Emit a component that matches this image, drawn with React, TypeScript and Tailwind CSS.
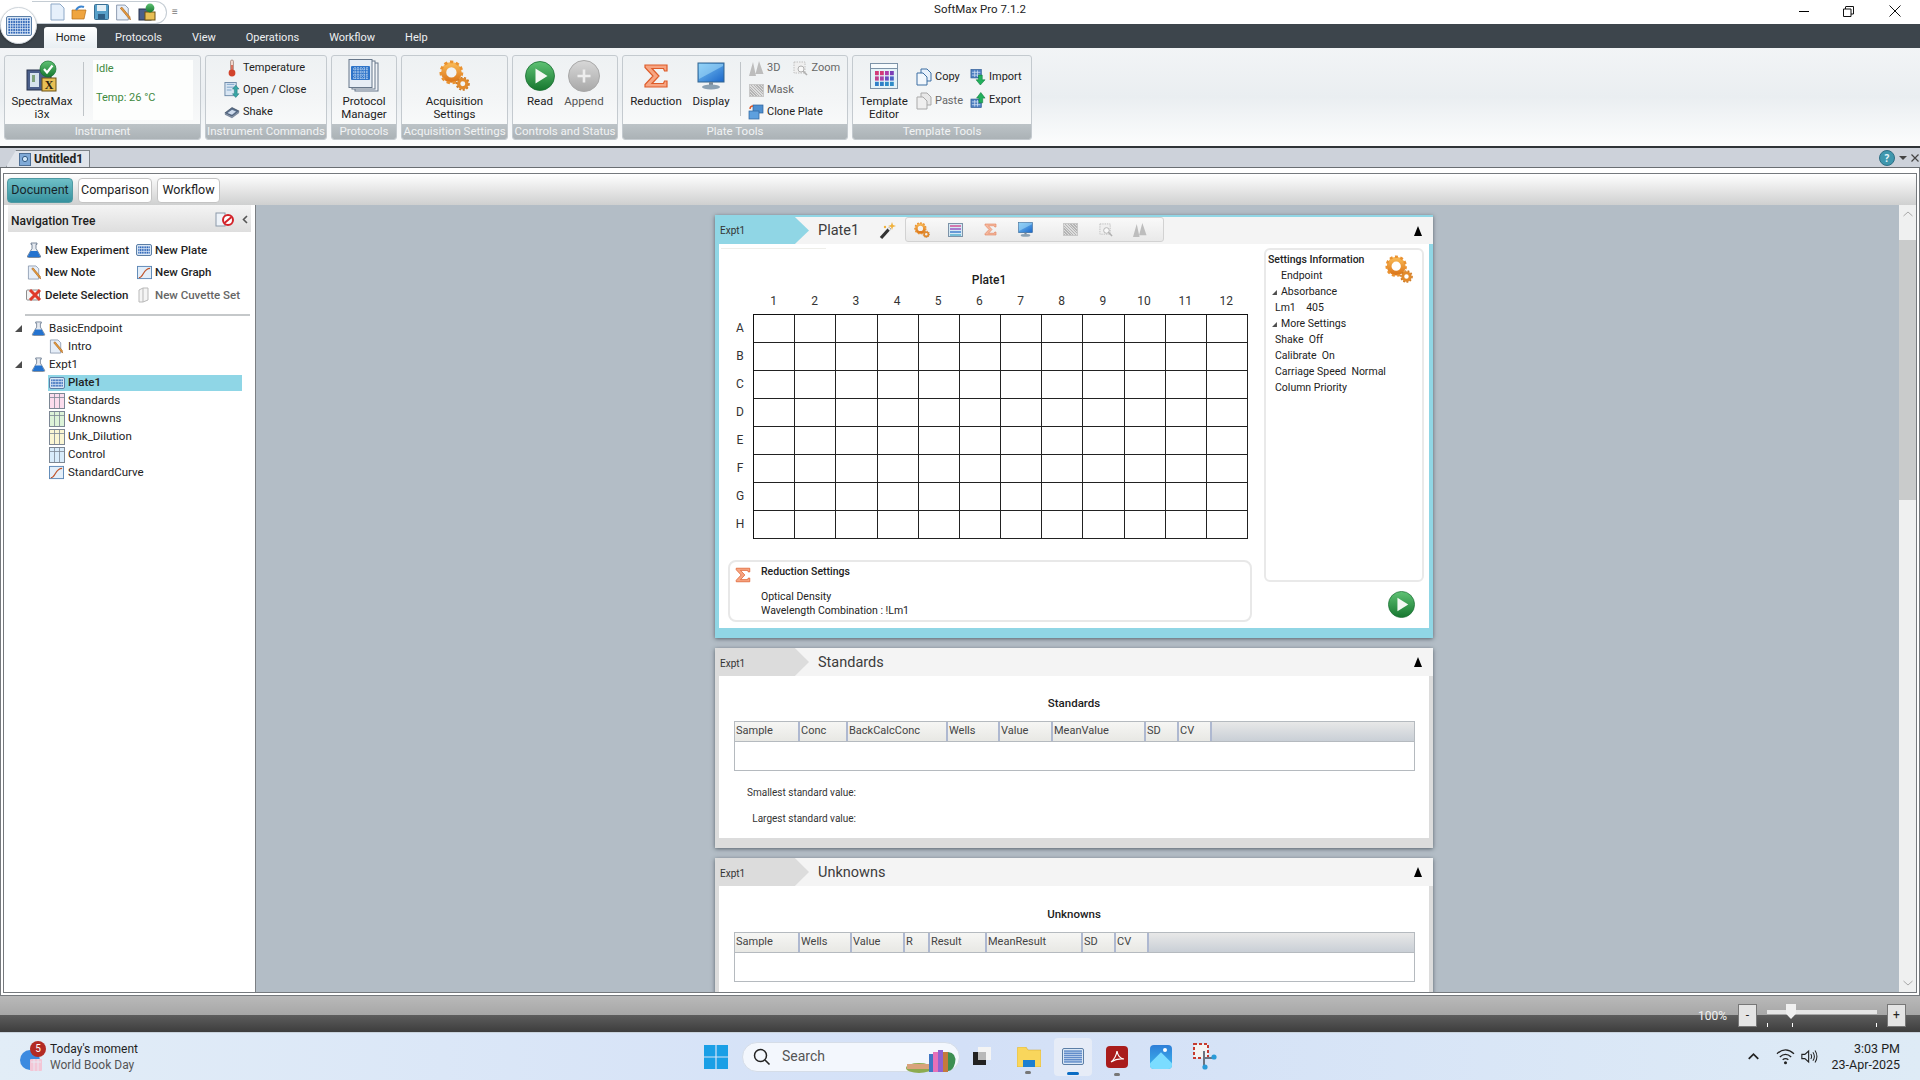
import React from "react";

const font = "font-['Roboto',sans-serif]";

// shared gradients for the drawn icons
function Defs() {
  return (
    <svg width="0" height="0" className="absolute">
      <defs>
        <linearGradient id="gGreen" x1="0" y1="0" x2="0" y2="1">
          <stop offset="0" stopColor="#5fc274" />
          <stop offset="1" stopColor="#16772f" />
        </linearGradient>
        <linearGradient id="gGray" x1="0" y1="0" x2="0" y2="1">
          <stop offset="0" stopColor="#d8d8d8" />
          <stop offset="1" stopColor="#a8a8a8" />
        </linearGradient>
        <linearGradient id="gBlue" x1="0" y1="0" x2="1" y2="1">
          <stop offset="0" stopColor="#7cc7f5" />
          <stop offset="1" stopColor="#1b66c9" />
        </linearGradient>
        <linearGradient id="gOrange" x1="0" y1="0" x2="0" y2="1">
          <stop offset="0" stopColor="#f7b552" />
          <stop offset="1" stopColor="#dd7a1e" />
        </linearGradient>
      </defs>
    </svg>
  );
}

function Play({ size = 30 }: { size?: number }) {
  return (
    <svg width={size} height={size} viewBox="0 0 30 30">
      <circle cx="15" cy="15" r="14.5" fill="url(#gGreen)" stroke="#1b6e33" strokeWidth="0.8" />
      <path d="M10.5 7.5 L22.5 15 L10.5 22.5 Z" fill="#f4f8f4" />
    </svg>
  );
}

function Gear({ size = 30, faded = false }: { size?: number; faded?: boolean }) {
  return (
    <svg width={size} height={size} viewBox="0 0 30 30" opacity={faded ? 0.7 : 1}>
      <circle cx="12" cy="12" r="7.5" fill="none" stroke="url(#gOrange)" strokeWidth="5" />
      <circle cx="12" cy="12" r="10.2" fill="none" stroke="#ea9230" strokeWidth="2.6" strokeDasharray="3.2 2.6" />
      <circle cx="23" cy="23" r="4" fill="none" stroke="#e28a2c" strokeWidth="3.2" />
      <circle cx="23" cy="23" r="6" fill="none" stroke="#cf7a22" strokeWidth="1.6" strokeDasharray="2 1.6" />
    </svg>
  );
}

function SigmaIcon({ size = 26, faded = false }: { size?: number; faded?: boolean }) {
  return (
    <svg width={size} height={size} viewBox="0 0 26 26" opacity={faded ? 0.75 : 1}>
      <path
        d="M2 2 H24 V8 H21.5 L20.5 5.5 H9 L16 13 L9 20.5 H20.5 L21.5 18 H24 V24 H2 V21.5 L10 13 L2 4.5 Z"
        fill="#f7a582"
        stroke="#dd5c2a"
        strokeWidth="1.2"
      />
    </svg>
  );
}

function Monitor({ size = 28, faded = false }: { size?: number; faded?: boolean }) {
  return (
    <svg width={size} height={size} viewBox="0 0 28 28" opacity={faded ? 0.8 : 1}>
      <rect x="1" y="1" width="26" height="19" fill="url(#gBlue)" stroke="#33648f" />
      <path d="M2 17 L26 4 V2 H2 Z" fill="#a4dcfa" opacity="0.55" />
      <rect x="12" y="20" width="4" height="3" fill="#7b8b99" />
      <ellipse cx="14" cy="25" rx="9" ry="2.4" fill="#8ba1b3" />
    </svg>
  );
}

function PlateGrid({ size = 16, rows = 4, cols = 6 }: { size?: number; rows?: number; cols?: number }) {
  const w = size;
  const h = Math.round(size * 0.78);
  const dots: React.ReactNode[] = [];
  for (let r = 0; r < rows; r++) {
    for (let c = 0; c < cols; c++) {
      dots.push(
        <rect
          key={`${r}-${c}`}
          x={2 + ((w - 4) * (c + 0.15)) / cols}
          y={2 + ((h - 4) * (r + 0.15)) / rows}
          width={((w - 4) / cols) * 0.7}
          height={((h - 4) / rows) * 0.7}
          fill="#2f66b8"
        />
      );
    }
  }
  return (
    <svg width={w} height={h} viewBox={`0 0 ${w} ${h}`}>
      <rect x="0.5" y="0.5" width={w - 1} height={h - 1} rx="1.5" fill="#dbe8f6" stroke="#5b7ea6" />
      {dots}
    </svg>
  );
}

function Flask({ size = 16 }: { size?: number }) {
  return (
    <svg width={size} height={size} viewBox="0 0 16 16">
      <path d="M5 1 H11 V2.4 H10 V6.5 L14.5 14 Q15 15.5 13.5 15.5 H2.5 Q1 15.5 1.5 14 L6 6.5 V2.4 H5 Z" fill="#e6eaf0" stroke="#5d6f85" strokeWidth="0.8" />
      <path d="M4.6 9 H11.4 L14 14 Q14.4 15 13.4 15 H2.6 Q1.6 15 2 14 Z" fill="#2473cf" />
    </svg>
  );
}

function Note({ size = 16 }: { size?: number }) {
  return (
    <svg width={size} height={size} viewBox="0 0 16 16">
      <path d="M1.5 1 H9.5 L12.5 4 V15 H1.5 Z" fill="#e6eef8" stroke="#7d8ea5" strokeWidth="0.8" />
      <path d="M5 4 L12.5 13 L14.5 15 L14 12 L6.5 3 Z" fill="#e69b3d" stroke="#a35f19" strokeWidth="0.6" />
    </svg>
  );
}

function GraphIcon({ size = 16 }: { size?: number }) {
  return (
    <svg width={size} height={size} viewBox="0 0 16 16">
      <rect x="0.5" y="1.5" width="15" height="13" fill="#e3eef9" stroke="#5b86b5" />
      <path d="M2 13.5 C7 13.5 6.5 3.5 14 3.5" fill="none" stroke="#c0562e" strokeWidth="1.3" />
    </svg>
  );
}

function TableIcon({ tint }: { tint: string }) {
  return (
    <svg width="16" height="16" viewBox="0 0 16 16">
      <rect x="0.5" y="0.5" width="15" height="15" fill={tint} stroke="#7c8794" />
      <path d="M0.5 4.5 H15.5 M5.5 0.5 V15.5 M10.5 0.5 V15.5" stroke="#7c8794" strokeWidth="0.8" fill="none" />
    </svg>
  );
}

function DeleteIcon() {
  return (
    <svg width="16" height="16" viewBox="0 0 16 16">
      <rect x="0.5" y="3" width="13" height="10" rx="1" fill="#f2f2f2" stroke="#8d8d8d" />
      <path d="M4 3 L14 13 M14 3 L4 13" stroke="#df3b2b" strokeWidth="3" />
    </svg>
  );
}

function CuvetteIcon() {
  return (
    <svg width="16" height="16" viewBox="0 0 16 16">
      <path d="M3 3 L7 1 H12 V13 L7 15 H3 Z M7 1 V15" fill="#f4f4f4" stroke="#b9b9b9" />
    </svg>
  );
}

function Triangle() {
  return <span className="block w-0 h-0 border-l-[7px] border-l-transparent border-b-[7px] border-b-[#4d4d4d]" />;
}

function Thermo() {
  return (
    <svg width="14" height="18" viewBox="0 0 14 18">
      <rect x="5.5" y="1" width="3" height="11" rx="1.5" fill="#f0d5cb" stroke="#8b6a5e" strokeWidth="0.6" />
      <circle cx="7" cy="14" r="3.4" fill="#d2432c" />
      <rect x="6.3" y="6" width="1.4" height="7" fill="#d2432c" />
    </svg>
  );
}

function DocPair() {
  return (
    <svg width="17" height="18" viewBox="0 0 17 18">
      <rect x="1" y="1" width="12" height="14" fill="#d9e6f3" stroke="#6d8aa8" />
      <path d="M3 3 H11 M3 6 H11 M3 9 H8" stroke="#7ba1c7" />
      <path d="M12.5 4 L16 8 H14 V13 H16 L12.5 17 L9 13 H11 V8 H9 Z" fill="#38a6a5" stroke="#1f6f73" strokeWidth="0.5" />
    </svg>
  );
}

function Shaker() {
  return (
    <svg width="18" height="14" viewBox="0 0 18 14">
      <path d="M1 8 L9 2 L17 6 L9 12 Z" fill="#5a6f8b" stroke="#2e3d50" strokeWidth="0.7" />
      <path d="M4 8 L9 4.5 L13.5 6.5 L9 10 Z" fill="#cfdced" />
      <path d="M1 8 V10 L9 14 L17 8 V6 L9 12 Z" fill="#7f8da1" />
    </svg>
  );
}

function Instrument() {
  return (
    <svg width="34" height="32" viewBox="0 0 34 32">
      <rect x="2" y="10" width="24" height="20" fill="#4a5f8a" stroke="#28344f" />
      <rect x="5" y="13" width="9" height="14" fill="#d6e4ee" />
      <rect x="7" y="15" width="3" height="7" fill="#7ea37c" />
      <rect x="17" y="18" width="14" height="13" fill="#e8bf55" stroke="#6d5212" />
      <text x="24" y="29" fontSize="12" fontWeight="700" textAnchor="middle" fontFamily="Liberation Serif, serif" fill="#2a2210">X</text>
      <circle cx="23" cy="9" r="8" fill="url(#gGreen)" stroke="#177030" strokeWidth="0.7" />
      <path d="M19 9 L22 12.5 L27.5 5.5" fill="none" stroke="#fff" strokeWidth="2.2" />
    </svg>
  );
}

function Pages() {
  return (
    <svg width="32" height="33" viewBox="0 0 32 33">
      <rect x="7" y="4" width="23" height="28" fill="#f1f4f8" stroke="#67778a" />
      <rect x="4" y="2" width="23" height="28" fill="#f7f9fb" stroke="#67778a" />
      <rect x="1" y="0.5" width="23" height="28" fill="#e6edf5" stroke="#67778a" />
      <rect x="3" y="7" width="19" height="14" rx="1" fill="#2e74c9" />
      <path d="M5 10 H20 M5 13 H20 M5 16 H20 M5 19 H20 M7 8 V20 M10 8 V20 M13 8 V20 M16 8 V20 M19 8 V20" stroke="#cfe2f6" strokeWidth="1" strokeDasharray="1.2 1" />
    </svg>
  );
}

function AppendBtn() {
  return (
    <svg width="32" height="32" viewBox="0 0 32 32">
      <circle cx="16" cy="16" r="15.5" fill="url(#gGray)" stroke="#a8a8a8" />
      <path d="M16 9.5 V22.5 M9.5 16 H22.5" stroke="#eeeeee" strokeWidth="2.6" />
    </svg>
  );
}

function TemplateIcon() {
  const colors = ["#d23a79", "#d23a79", "#b03ba9", "#7b3eb6", "#c0408e", "#a842a8", "#6b4bc0", "#4b63c4", "#2f7fc8", "#2f7fc8", "#2f8cc8", "#2f8cc8"];
  return (
    <svg width="28" height="26" viewBox="0 0 28 26">
      <rect x="0.5" y="0.5" width="27" height="25" fill="#e3f2f8" stroke="#7d93a8" />
      <rect x="0.5" y="0.5" width="27" height="5" fill="#f7fbfd" stroke="#7d93a8" />
      {colors.map((c, i) => (
        <rect key={i} x={5 + (i % 4) * 5} y={8 + Math.floor(i / 4) * 5.4} width="3.8" height="4.2" fill={c} />
      ))}
    </svg>
  );
}

function CopyIcon({ gray = false }: { gray?: boolean }) {
  const s = gray ? "#a9a9a9" : "#3d6fa3";
  return (
    <svg width="16" height="18" viewBox="0 0 16 18">
      <path d="M5 1 H11 L15 5 V13 H5 Z" fill={gray ? "#e8e8e8" : "#e8f1fb"} stroke={s} />
      <path d="M1 5 H7 L11 9 V17 H1 Z" fill={gray ? "#efefef" : "#f2f7fc"} stroke={s} />
    </svg>
  );
}

function ArrowDoc({ up }: { up: boolean }) {
  return (
    <svg width="17" height="18" viewBox="0 0 17 18">
      <rect x={1} y={up ? 8 : 1} width="11" height="9" fill="#4d7fc0" stroke="#2c5a95" strokeWidth="0.7" />
      <path d={up ? "M2 11 H11 M2 14 H11 M5 9 V16 M8 9 V16" : "M2 4 H11 M2 7 H11 M5 2 V9 M8 2 V9"} stroke="#d5e4f6" strokeWidth="0.8" />
      <path
        d={up ? "M11.5 1 L16 7 H13.5 V12 H9.5 V7 H7 Z" : "M9 7 H13 V12 H16 L11 17.5 L6.5 12 H9 Z"}
        fill="#21b05c"
        stroke="#0f7a3a"
        strokeWidth="0.6"
      />
    </svg>
  );
}

function ThreeD({ size = 15 }: { size?: number }) {
  return (
    <svg width={size} height={size} viewBox="0 0 15 15">
      <path d="M0 15 L4 1 L7 15 Z M6.5 13 L10 0 L14.5 13 Z" fill="#bdbdbd" />
    </svg>
  );
}

function ZoomBox({ size = 15 }: { size?: number }) {
  return (
    <svg width={size} height={size} viewBox="0 0 15 15">
      <rect x="1" y="1" width="11" height="11" fill="#efefef" stroke="#c0c0c0" strokeDasharray="1.5 1" />
      <circle cx="8" cy="8" r="3" fill="#f8f8f8" stroke="#b0b0b0" />
      <path d="M10 10 L14 14" stroke="#b0b0b0" strokeWidth="1.6" />
    </svg>
  );
}

function MaskIcon({ w = 15, h = 13 }: { w?: number; h?: number }) {
  return <span className="block bg-[repeating-linear-gradient(45deg,#b4b4b4_0_1px,#dcdcdc_1px_2px)] border border-[#c8c8c8]" style={{ width: w, height: h }} />;
}

function ClonePlate() {
  return (
    <svg width="16" height="16" viewBox="0 0 16 16">
      <rect x="5" y="1" width="10" height="8" fill="#4d8fd0" stroke="#2f639c" strokeWidth="0.7" />
      <rect x="1" y="7" width="10" height="8" fill="#5ea0de" stroke="#2f639c" strokeWidth="0.7" />
      <path d="M2 5 Q2 2 5 2" stroke="#d95a2b" fill="none" strokeWidth="1.4" />
    </svg>
  );
}

function RibbonGroup({ label, w, children }: { label: string; w: string; children: React.ReactNode }) {
  return (
    <div className={`${w} h-[85px] shrink-0 flex flex-col rounded-[3px] border border-[#c4cacf] overflow-hidden bg-gradient-to-b from-[#eef1f3] via-[#f3f5f6] to-[#fbfcfc]`}>
      <div className="h-[68px] relative flex">{children}</div>
      <div className="h-[15px] flex items-center justify-center text-[11.5px] leading-none text-[#f1f3f4] bg-gradient-to-b from-[#bcc3c7] to-[#abb2b6] whitespace-nowrap">
        {label}
      </div>
    </div>
  );
}

function BigBtn({ icon, label, w, gray = false }: { icon: React.ReactNode; label: React.ReactNode; w: string; gray?: boolean }) {
  return (
    <div className={`${w} flex flex-col items-center shrink-0`}>
      <div className="h-[37px] flex items-center justify-center pt-[2px]">{icon}</div>
      <div className={`mt-[2px] text-center text-[11.5px] leading-[13px] ${gray ? "text-[#555]" : "text-[#222]"}`}>{label}</div>
    </div>
  );
}

function SmallBtn({ icon, label, gray = false, className = "" }: { icon: React.ReactNode; label: string; gray?: boolean; className?: string }) {
  return (
    <div className={`flex items-center gap-[3px] h-[18px] text-[11px] whitespace-nowrap ${gray ? "text-[#666]" : "text-[#222]"} ${className}`}>
      <span className="w-[16px] flex items-center justify-center shrink-0">{icon}</span>
      {label}
    </div>
  );
}

function TitleBar() {
  return (
    <div className="h-[24px] bg-white flex items-center relative shrink-0">
      <div className="ml-[32px] h-[23px] w-[135px] rounded-r-full border border-l-0 border-[#c4ccd3] flex items-center pl-[18px] gap-[6px] bg-white">
        <svg width="15" height="18" viewBox="0 0 15 18">
          <path d="M1 1 H10 L14 5 V17 H1 Z" fill="#e6f0fb" stroke="#8da8c7" />
        </svg>
        <svg width="17" height="17" viewBox="0 0 17 17">
          <path d="M1 6 H15 L13 15 H1 Z" fill="#efa540" stroke="#b56f17" strokeWidth="0.7" />
          <path d="M5 6 Q8 1 13 3" fill="none" stroke="#3f86cf" strokeWidth="2" />
        </svg>
        <svg width="15" height="16" viewBox="0 0 15 16">
          <rect x="0.5" y="0.5" width="14" height="15" rx="1" fill="#57a0c9" stroke="#3a6f93" />
          <rect x="3" y="1" width="9" height="6" fill="#e3eff6" />
          <rect x="4" y="10" width="7" height="5" fill="#2f5f85" />
        </svg>
        <Note size={17} />
        <svg width="18" height="18" viewBox="0 0 18 18">
          <rect x="1" y="6" width="12" height="11" fill="#4a5f8a" stroke="#28344f" />
          <rect x="7" y="9" width="10" height="8" fill="#e8bf55" stroke="#6d5212" />
          <circle cx="12" cy="5" r="4.4" fill="url(#gGreen)" />
        </svg>
      </div>
      <span className="ml-[5px] text-[#777] text-[10px] leading-none">≡</span>
      <div className="absolute left-[40px] right-0 top-0 h-[20px] flex items-center justify-center text-[11.5px] text-[#222] pointer-events-none">SoftMax Pro 7.1.2</div>
      <span className="absolute right-[111px] top-[11px] w-[10px] h-px bg-black" />
      <svg className="absolute right-[66px] top-[6px]" width="11" height="11" viewBox="0 0 11 11">
        <path d="M0.5 3 H8 V10.5 H0.5 Z M2.5 3 V1 Q2.5 0.5 3 0.5 H10.5 V8 H8" fill="none" stroke="#111" />
      </svg>
      <svg className="absolute right-[19px] top-[5px]" width="12" height="12" viewBox="0 0 12 12">
        <path d="M0.5 0.5 L11.5 11.5 M11.5 0.5 L0.5 11.5" stroke="#111" />
      </svg>
    </div>
  );
}

function MenuBar() {
  return (
    <div className="h-[24px] bg-[#3d454c] flex items-end pl-[44px] shrink-0 text-[11px] text-[#eef0f2]">
      <div className="w-[53px] h-[21px] pt-[2px] rounded-t-[3px] bg-gradient-to-b from-white to-[#e9eff3] text-[#222] flex items-center justify-center">Home</div>
      <div className="h-[22px] pt-[3px] flex items-center gap-[30px] pl-[18px]">
        <span>Protocols</span>
        <span>View</span>
        <span>Operations</span>
        <span>Workflow</span>
        <span>Help</span>
      </div>
    </div>
  );
}

function Ribbon() {
  return (
    <div className="h-[98px] shrink-0 pt-[7px] pl-[4px] flex gap-[4px] bg-gradient-to-b from-[#f2f4f6] via-[#eaeef1] to-[#fcfdfd]">
      <RibbonGroup label="Instrument" w="w-[197px]">
        <BigBtn w="w-[74px]" icon={<Instrument />} label={<>SpectraMax<br />i3x</>} />
        <div className="w-px h-[54px] mt-[6px] bg-[#bfc4c8] ml-[4px]" />
        <div className="ml-[9px] mt-[4px] w-[100px] h-[60px] bg-[#fdfefd] pl-[3px] pt-[1px] text-[11px] text-[#3f8a3f]">
          <div className="h-[20px] leading-[16px]">Idle</div>
          <div className="mt-[9px] leading-[16px]">Temp: 26 °C</div>
        </div>
      </RibbonGroup>
      <RibbonGroup label="Instrument Commands" w="w-[122px]">
        <div className="pl-[18px] pt-[3px] flex flex-col gap-[4px]">
          <SmallBtn icon={<Thermo />} label="Temperature" />
          <SmallBtn icon={<DocPair />} label="Open / Close" />
          <SmallBtn icon={<Shaker />} label="Shake" />
        </div>
      </RibbonGroup>
      <RibbonGroup label="Protocols" w="w-[66px]">
        <BigBtn w="w-full" icon={<Pages />} label={<>Protocol<br />Manager</>} />
      </RibbonGroup>
      <RibbonGroup label="Acquisition Settings" w="w-[107px]">
        <BigBtn w="w-full" icon={<Gear size={31} />} label={<>Acquisition<br />Settings</>} />
      </RibbonGroup>
      <RibbonGroup label="Controls and Status" w="w-[106px]">
        <BigBtn w="w-[46px] ml-[4px]" icon={<Play size={30} />} label="Read" />
        <BigBtn w="w-[40px] ml-[1px]" icon={<AppendBtn />} label="Append" gray />
      </RibbonGroup>
      <RibbonGroup label="Plate Tools" w="w-[226px]">
        <BigBtn w="w-[56px] ml-[5px]" icon={<SigmaIcon size={26} />} label="Reduction" />
        <BigBtn w="w-[50px] ml-[2px]" icon={<Monitor size={28} />} label="Display" />
        <div className="w-px h-[54px] mt-[6px] bg-[#bfc4c8] ml-[4px]" />
        <div className="ml-[7px] pt-[3px] flex flex-col gap-[4px]">
          <div className="flex gap-[12px]">
            <SmallBtn icon={<ThreeD />} label="3D" gray />
            <SmallBtn icon={<ZoomBox />} label="Zoom" gray />
          </div>
          <SmallBtn icon={<MaskIcon />} label="Mask" gray />
          <SmallBtn icon={<ClonePlate />} label="Clone Plate" />
        </div>
      </RibbonGroup>
      <RibbonGroup label="Template Tools" w="w-[180px]">
        <BigBtn w="w-[58px] ml-[2px]" icon={<TemplateIcon />} label={<>Template<br />Editor</>} />
        <div className="ml-[3px] w-[54px] pt-[12px] flex flex-col gap-[6px]">
          <SmallBtn icon={<CopyIcon />} label="Copy" />
          <SmallBtn icon={<CopyIcon gray />} label="Paste" gray />
        </div>
        <div className="pt-[12px] flex flex-col gap-[5px]">
          <SmallBtn icon={<ArrowDoc up={false} />} label="Import" />
          <SmallBtn icon={<ArrowDoc up />} label="Export" />
        </div>
      </RibbonGroup>
    </div>
  );
}

function DocTabBar() {
  return (
    <div className="h-[19px] shrink-0 bg-[#cdd2da] border-t-2 border-[#2f3437] border-b border-b-[#6a6e72] flex items-end pl-[3px] box-content relative">
      <div className="ml-[3px] h-[17px] w-[84px] bg-[#e0e4ea] border border-b-0 border-[#7e8489] [clip-path:polygon(12%_0,100%_0,100%_100%,0_100%)] flex items-center pl-[12px] gap-[3px] text-[12px] font-bold text-[#222]">
        <svg width="12" height="13" viewBox="0 0 12 13">
          <rect x="0.5" y="0.5" width="11" height="12" fill="#7fa9d6" stroke="#4d6f96" />
          <circle cx="6" cy="6" r="2.6" fill="#d3e9fb" stroke="#335a82" />
        </svg>
        Untitled1
      </div>
      <div className="absolute right-[1px] top-[1px] h-[18px] flex items-center gap-[4px]">
        <svg width="16" height="16" viewBox="0 0 16 16">
          <circle cx="8" cy="8" r="7.5" fill="#3f97ad" stroke="#2f6f85" />
          <text x="8" y="11.5" fontSize="10" textAnchor="middle" fontWeight="700" fontFamily="Noto Sans, sans-serif" fill="#e6f5fa">?</text>
        </svg>
        <span className="w-0 h-0 border-x-[4px] border-x-transparent border-t-[4px] border-t-[#444]" />
        <svg width="8" height="8" viewBox="0 0 8 8">
          <path d="M0.5 0.5 L7.5 7.5 M7.5 0.5 L0.5 7.5" stroke="#444" strokeWidth="1.2" />
        </svg>
      </div>
    </div>
  );
}

function TabBtn({ label, active = false, w }: { label: string; active?: boolean; w: string }) {
  return (
    <div
      className={`${w} h-[25px] rounded-[4px] flex items-center justify-center text-[12.5px] border ${
        active ? "bg-gradient-to-b from-[#6fc0c8] to-[#35919e] border-[#4f9aa3] text-[#16242a]" : "bg-white border-[#c4c4c4] text-[#1d1d1d]"
      }`}
    >
      {label}
    </div>
  );
}

function ActionRow({ icon, label, gray = false }: { icon: React.ReactNode; label: string; gray?: boolean }) {
  return (
    <div className={`flex items-center h-[22.5px] gap-[2px] text-[11.5px] font-medium whitespace-nowrap ${gray ? "text-[#666]" : "text-[#1e1e1e]"}`}>
      <span className="w-[18px] flex justify-center shrink-0">{icon}</span>
      {label}
    </div>
  );
}

function TreeRow({ icon, label, selected = false }: { icon: React.ReactNode; label: string; selected?: boolean }) {
  return (
    <div className="h-[18px] py-[1px]">
      <div className={`ml-[44px] w-[194px] h-[16px] flex items-center gap-[3px] text-[11.5px] text-[#222] ${selected ? "bg-[#8fd6e6] font-medium" : ""}`}>
        <span className="w-[17px] flex justify-center shrink-0">{icon}</span>
        {label}
      </div>
    </div>
  );
}

function TreeParent({ label }: { label: string }) {
  return (
    <div className="h-[18px] flex items-center text-[11.5px] text-[#222] pl-[11px]">
      <Triangle />
      <span className="ml-[8px] w-[16px] flex justify-center">
        <Flask size={15} />
      </span>
      <span className="ml-[3px]">{label}</span>
    </div>
  );
}

function NavTree() {
  return (
    <div className="w-[252px] shrink-0 bg-white border-r border-[#7b7f83] flex flex-col">
      <div className="h-[27px] mx-[4px] pt-[4px] bg-gradient-to-b from-[#f4f4f4] to-[#dedede] flex items-center pl-[3px] relative text-[12px] font-medium text-[#1d1d1d]">
        Navigation Tree
        <svg className="absolute right-[17px] top-[5px]" width="19" height="18" viewBox="0 0 19 18">
          <rect x="1" y="3" width="9" height="13" fill="#eef3f9" stroke="#8c9aa9" />
          <circle cx="13" cy="10" r="5" fill="#fff" stroke="#d3232a" strokeWidth="2" />
          <path d="M9.5 13 L16.5 7" stroke="#d3232a" strokeWidth="2" />
        </svg>
        <svg className="absolute right-[3px] top-[10px]" width="6" height="9" viewBox="0 0 6 9">
          <path d="M5 1 L1.5 4.5 L5 8" fill="none" stroke="#555" strokeWidth="1.6" />
        </svg>
      </div>
      <div className="pl-[21px] pt-[7px] grid grid-cols-[110px_1fr]">
        <ActionRow icon={<Flask size={16} />} label="New Experiment" />
        <ActionRow icon={<PlateGrid size={16} rows={3} cols={7} />} label="New Plate" />
        <ActionRow icon={<Note size={15} />} label="New Note" />
        <ActionRow icon={<GraphIcon size={15} />} label="New Graph" />
        <ActionRow icon={<DeleteIcon />} label="Delete Selection" />
        <ActionRow icon={<CuvetteIcon />} label="New Cuvette Set" gray />
      </div>
      <div className="ml-[21px] mt-[7px] w-[225px] h-[2px] bg-[#c5c8ca]" />
      <div className="mt-[4px]">
        <TreeParent label="BasicEndpoint" />
        <TreeRow icon={<Note size={15} />} label="Intro" />
        <TreeParent label="Expt1" />
        <TreeRow selected icon={<PlateGrid size={16} rows={3} cols={8} />} label="Plate1" />
        <TreeRow icon={<TableIcon tint="#fbdcec" />} label="Standards" />
        <TreeRow icon={<TableIcon tint="#ddf3d8" />} label="Unknowns" />
        <TreeRow icon={<TableIcon tint="#fbf6d3" />} label="Unk_Dilution" />
        <TreeRow icon={<TableIcon tint="#d9ecfb" />} label="Control" />
        <TreeRow icon={<GraphIcon size={15} />} label="StandardCurve" />
      </div>
    </div>
  );
}

function CardHeader({ title, active = false, children }: { title: string; active?: boolean; children?: React.ReactNode }) {
  return (
    <div className={`${active ? "h-[27px]" : "h-[28px]"} bg-[#f4f4f4] flex items-center relative shrink-0`}>
      <div
        className={`w-[94px] h-full pl-[5px] flex items-center text-[10px] text-[#333] [clip-path:polygon(0_0,85%_0,100%_50%,85%_100%,0_100%)] ${
          active ? "bg-[#90d6e5] pt-0" : "bg-[#dcdcdc] pt-[2px]"
        }`}
      >
        Expt1
      </div>
      <div className={`ml-[9px] min-w-[61px] text-[14.5px] text-[#3c3c3c] ${active ? "" : "pt-[2px]"}`}>{title}</div>
      {children}
      <span className="absolute right-[11px] top-[9px] w-0 h-0 border-x-[4px] border-x-transparent border-b-[10px] border-b-black" />
    </div>
  );
}

function TemplateMini() {
  return (
    <svg width="15" height="14" viewBox="0 0 15 14">
      <rect x="0.5" y="0.5" width="14" height="13" fill="#d6e9f4" stroke="#7d93a8" />
      <path d="M2 3 H13" stroke="#d25c9a" strokeWidth="1.6" />
      <path d="M2 6 H13" stroke="#9a62c4" strokeWidth="1.6" />
      <path d="M2 9 H13" stroke="#4c86d0" strokeWidth="1.6" />
      <path d="M2 12 H13" stroke="#35a0c4" strokeWidth="1.2" />
    </svg>
  );
}

function PlateCard() {
  const nums = Array.from({ length: 12 }, (_, i) => i + 1);
  const rows = ["A", "B", "C", "D", "E", "F", "G", "H"];
  return (
    <div className="w-[718px] h-[423px] shrink-0 bg-[#90d6e5] pt-[2px] flex flex-col shadow-[0_1px_4px_rgba(40,50,60,0.65)]">
      <CardHeader title="Plate1" active>
        <svg width="18" height="18" viewBox="0 0 18 18">
          <path d="M2 16 L11 6" stroke="#333" strokeWidth="3.2" />
          <path d="M9.5 7.5 L11 6" stroke="#e8e8e8" strokeWidth="3.2" />
          <path d="M13 0 L14 3 L17 4 L14 5 L13 8 L12 5 L9 4 L12 3 Z" fill="#f0b23c" />
          <circle cx="6" cy="5" r="1.2" fill="#f0b23c" />
        </svg>
        <div className="ml-[8px] w-[259px] h-[25px] mt-[-2px] rounded-[3px] border border-[#d2d2d2] bg-gradient-to-b from-[#f9f9f9] to-[#e9e9e9] relative flex items-center">
          <span className="w-[32px] flex justify-center"><Gear size={16} /></span>
          <span className="w-[35px] flex justify-center"><TemplateMini /></span>
          <span className="w-[35px] flex justify-center"><SigmaIcon size={13} faded /></span>
          <span className="w-[35px] flex justify-center"><Monitor size={15} /></span>
          <span className="w-[10px]" />
          <span className="w-[35px] flex justify-center"><MaskIcon w={15} h={13} /></span>
          <span className="w-[35px] flex justify-center"><ZoomBox size={14} /></span>
          <span className="w-[34px] flex justify-center"><ThreeD size={14} /></span>
        </div>
      </CardHeader>
      <div className="mx-[4px] h-[384px] bg-white flex">
        <div className="w-[540px] shrink-0 relative">
          <div className="absolute left-[2px] top-[4px] w-[105px] h-px bg-[#eeeeea]" />
          <div className="pt-[28px] h-[44px] leading-[16px] text-center text-[12px] font-medium text-[#1c1c1c]">Plate1</div>
          <div className="pl-[34px] h-[26px] grid grid-cols-[repeat(12,41.17px)] items-center text-[12px] text-[#333] text-center">
            {nums.map((n) => (
              <span key={n}>{n}</span>
            ))}
          </div>
          <div className="flex">
            <div className="w-[34px] pl-[8px] text-[12px] text-[#333]">
              {rows.map((r) => (
                <div key={r} className="h-[28px] flex items-center justify-center">{r}</div>
              ))}
            </div>
            <div className="w-[495px] h-[225px] border-t border-l border-[#111] grid grid-cols-12 grid-rows-8">
              {Array.from({ length: 96 }, (_, i) => (
                <div key={i} className="border-r border-b border-[#222]" />
              ))}
            </div>
          </div>
          <div className="mt-[21px] ml-[9px] w-[524px] h-[62px] rounded-[8px] border-2 border-[#e8e8e8] flex text-[10.5px] text-[#222]">
            <span className="ml-[5px] mt-[5px] w-[20px]"><SigmaIcon size={16} /></span>
            <div className="ml-[6px] pt-[2px]">
              <div className="h-[16px] leading-[16px] font-medium">Reduction Settings</div>
              <div className="mt-[10px] leading-[14px]">Optical Density</div>
              <div className="leading-[14px]">Wavelength Combination : !Lm1</div>
            </div>
          </div>
        </div>
        <div className="ml-[5px] w-[160px] shrink-0 pt-[4px]">
          <div className="h-[334px] rounded-[6px] border-2 border-[#e9e9e9] pl-[2px] pt-[2px] relative text-[10.5px] leading-[16px] text-[#222]">
            <div className="font-medium">Settings Information</div>
            <div className="pl-[13px]">Endpoint</div>
            <div className="flex items-center pl-[3px]">
              <span className="scale-[0.7]"><Triangle /></span>
              <span className="ml-[3px]">Absorbance</span>
            </div>
            <div className="pl-[7px]">Lm1&nbsp;&nbsp;&nbsp;&nbsp;405</div>
            <div className="flex items-center pl-[3px]">
              <span className="scale-[0.7]"><Triangle /></span>
              <span className="ml-[3px]">More Settings</span>
            </div>
            <div className="pl-[7px]">Shake&nbsp;&nbsp;Off</div>
            <div className="pl-[7px]">Calibrate&nbsp;&nbsp;On</div>
            <div className="pl-[7px]">Carriage Speed&nbsp;&nbsp;Normal</div>
            <div className="pl-[7px]">Column Priority</div>
            <span className="absolute right-[9px] top-[5px]"><Gear size={28} /></span>
          </div>
          <div className="mt-[9px] pl-[124px]"><Play size={27} /></div>
        </div>
      </div>
      <div className="flex-1" />
    </div>
  );
}

function DataTable({ cols }: { cols: { name: string; w: string }[] }) {
  return (
    <div className="mx-[15px] w-[681px] h-[50px] border border-[#b5babf] bg-white">
      <div className="h-[20px] flex bg-gradient-to-b from-[#e8e8e8] to-[#c9cfd6] border-b border-[#b5babf]">
        {cols.map((c) => (
          <div key={c.name} className={`${c.w} h-full border-r-2 border-[#aeb8d0] bg-gradient-to-b from-[#f6f6f4] to-[#e8e8e4] pl-[1px] flex items-center text-[11px] text-[#444]`}>
            {c.name}
          </div>
        ))}
      </div>
    </div>
  );
}

function StandardsCard() {
  const cols = [
    { name: "Sample", w: "w-[65px]" },
    { name: "Conc", w: "w-[48px]" },
    { name: "BackCalcConc", w: "w-[100px]" },
    { name: "Wells", w: "w-[52px]" },
    { name: "Value", w: "w-[53px]" },
    { name: "MeanValue", w: "w-[93px]" },
    { name: "SD", w: "w-[33px]" },
    { name: "CV", w: "w-[33px]" },
  ];
  return (
    <div className="w-[718px] h-[200px] shrink-0 bg-[#dcdcdc] flex flex-col shadow-[0_1px_4px_rgba(40,50,60,0.65)]">
      <CardHeader title="Standards" />
      <div className="mx-[4px] h-[162px] bg-white shrink-0">
        <div className="pt-[19px] h-[45px] leading-[16px] text-center text-[11.5px] font-medium text-[#1c1c1c]">Standards</div>
        <DataTable cols={cols} />
        <div className="mt-[15px] w-[137px] text-right text-[10px] leading-[14px] text-[#333]">Smallest standard value:</div>
        <div className="mt-[12px] w-[137px] text-right text-[10px] leading-[14px] text-[#333]">Largest standard value:</div>
      </div>
    </div>
  );
}

function UnknownsCard() {
  const cols = [
    { name: "Sample", w: "w-[65px]" },
    { name: "Wells", w: "w-[52px]" },
    { name: "Value", w: "w-[53px]" },
    { name: "R", w: "w-[25px]" },
    { name: "Result", w: "w-[57px]" },
    { name: "MeanResult", w: "w-[96px]" },
    { name: "SD", w: "w-[33px]" },
    { name: "CV", w: "w-[33px]" },
  ];
  return (
    <div className="w-[718px] h-[201px] shrink-0 bg-[#dcdcdc] flex flex-col shadow-[0_1px_4px_rgba(40,50,60,0.65)]">
      <CardHeader title="Unknowns" />
      <div className="mx-[4px] h-[163px] bg-white shrink-0">
        <div className="pt-[20px] h-[46px] leading-[16px] text-center text-[11.5px] font-medium text-[#1c1c1c]">Unknowns</div>
        <DataTable cols={cols} />
      </div>
    </div>
  );
}

function ScrollBar() {
  return (
    <div className="w-[17px] shrink-0 bg-[#eff0f0] flex flex-col">
      <div className="h-[35px] pt-[6px] flex justify-center">
        <svg width="10" height="6" viewBox="0 0 10 6"><path d="M0.5 5 L5 1 L9.5 5" fill="none" stroke="#a8a8a8" /></svg>
      </div>
      <div className="h-[260px] bg-[#c9cbcb]" />
      <div className="flex-1" />
      <div className="h-[18px] flex items-center justify-center">
        <svg width="10" height="6" viewBox="0 0 10 6"><path d="M0.5 1 L5 5 L9.5 1" fill="none" stroke="#a8a8a8" /></svg>
      </div>
    </div>
  );
}

function Workspace() {
  return (
    <div className="flex-1 min-h-0 bg-white border-x border-b border-[#75797d] px-[2px] pt-[5px] pb-[2px] flex flex-col">
      <div className="flex-1 min-h-0 border border-[#75797d] flex flex-col overflow-hidden">
        <div className="h-[31px] shrink-0 bg-gradient-to-b from-white to-[#cfd0d0] flex items-center gap-[5px] pl-[3px] pt-[1px]">
          <TabBtn label="Document" active w="w-[66px]" />
          <TabBtn label="Comparison" w="w-[74px]" />
          <TabBtn label="Workflow" w="w-[63px]" />
        </div>
        <div className="flex-1 min-h-0 flex">
          <NavTree />
          <div className="flex-1 min-w-0 bg-[#b3bdc6] pt-[10px] pl-[459px] flex flex-col gap-[10px] overflow-hidden">
            <PlateCard />
            <StandardsCard />
            <UnknownsCard />
          </div>
          <ScrollBar />
        </div>
      </div>
    </div>
  );
}

function StatusBar() {
  return (
    <div className="h-[36px] shrink-0 relative bg-[linear-gradient(#b9b9b9_0,#a7a7a7_52%,#5d5d5d_53%,#3d3d3d_100%)]">
      <div className="absolute right-0 top-0 h-full flex items-center">
        <span className="text-[12px] text-[#f0f0f0] mr-[11px] mt-[3px]">100%</span>
        <div className="w-[19px] h-[23px] bg-[#e4e4e4] border border-[#777] flex items-center justify-center text-[12px] text-[#222] mt-[2px]">-</div>
        <div className="relative w-[130px] h-[36px]">
          <div className="absolute left-[10px] top-[14px] w-[110px] h-[4px] bg-[#e6e6e6]" />
          <div className="absolute left-[29px] top-[8px] w-[10px] h-[15px] bg-[#f0f0f0] [clip-path:polygon(0_0,100%_0,100%_65%,50%_100%,0_65%)]" />
          <span className="absolute left-[10px] top-[27px] w-px h-[4px] bg-white" />
          <span className="absolute left-[35px] top-[27px] w-px h-[4px] bg-white" />
          <span className="absolute left-[119px] top-[27px] w-px h-[4px] bg-white" />
        </div>
        <div className="w-[19px] h-[23px] bg-[#e4e4e4] border border-[#777] flex items-center justify-center text-[12px] text-[#222] mt-[2px] mr-[14px]">+</div>
      </div>
    </div>
  );
}

function Taskbar() {
  return (
    <div className="h-[48px] shrink-0 border-t border-[#c8d2dc] relative flex items-center justify-between bg-gradient-to-r from-[#e2edf7] via-[#d3e0f7] to-[#deebf6]">
      <div className="ml-[20px] flex items-center">
        <div className="relative w-[22px] h-[32px]">
          <svg className="absolute left-0 top-[7px]" width="22" height="24" viewBox="0 0 22 24">
            <circle cx="10" cy="12" r="10" fill="#3b8ae0" />
            <rect x="10" y="11" width="12" height="12" rx="1" fill="#f3c6d6" />
            <path d="M11 14 H21 M14 11 V23 M18 11 V23" stroke="#e9e9f2" />
          </svg>
          <span className="absolute left-[10px] top-[0px] w-[16px] h-[16px] rounded-full bg-[#b32b24] text-white text-[10px] leading-[16px] text-center">5</span>
        </div>
        <div className="ml-[8px] text-[12px] leading-[16px] text-[#1f1f1f]">
          <div>Today's moment</div>
          <div className="text-[#555]">World Book Day</div>
        </div>
      </div>
      <div className="flex items-center text-[12.5px] text-[#1f1f1f] mr-[20px]">
        <svg className="mr-[13px]" width="19" height="19" viewBox="0 0 24 24">
          <path d="M6 15 L12 9 L18 15" fill="none" stroke="#222" strokeWidth="2.2" />
        </svg>
        <svg className="mr-[6px]" width="19" height="17" viewBox="0 0 20 18">
          <path d="M1 6 Q10 -2 19 6 M4 9.5 Q10 4 16 9.5 M7 12.5 Q10 10 13 12.5" fill="none" stroke="#222" strokeWidth="1.4" />
          <circle cx="10" cy="15.5" r="1.6" fill="#222" />
        </svg>
        <svg className="mr-[14px]" width="17" height="17" viewBox="0 0 20 18">
          <path d="M1 6.5 H4.5 L9 2.5 V15.5 L4.5 11.5 H1 Z" fill="none" stroke="#222" strokeWidth="1.3" />
          <path d="M11.5 6 Q13.5 9 11.5 12 M14 4 Q17.5 9 14 14 M16.5 2 Q21 9 16.5 16" fill="none" stroke="#222" strokeWidth="1.2" />
        </svg>
        <div className="text-right leading-[16px]">
          <div>3:03 PM</div>
          <div>23-Apr-2025</div>
        </div>
      </div>
      <div className="absolute left-[704px] top-0 h-full flex items-center">
        <svg width="24" height="24" viewBox="0 0 24 24">
          <path d="M0 0 H11.4 V11.4 H0 Z M12.6 0 H24 V11.4 H12.6 Z M0 12.6 H11.4 V24 H0 Z M12.6 12.6 H24 V24 H12.6 Z" fill="#1a9fe6" />
        </svg>
        <div className="ml-[14px] w-[218px] h-[30px] rounded-full bg-[#f3f7fd] border border-[#d5dde8] flex items-center relative text-[14px] text-[#555]">
          <svg className="ml-[10px]" width="18" height="18" viewBox="0 0 18 18">
            <circle cx="7.5" cy="7.5" r="6" fill="none" stroke="#222" strokeWidth="1.5" />
            <path d="M12 12 L16.5 16.5" stroke="#222" strokeWidth="1.6" />
          </svg>
          <span className="ml-[11px]">Search</span>
          <svg className="absolute right-[2px] top-[6px]" width="52" height="24" viewBox="0 0 52 24">
            <ellipse cx="14" cy="19" rx="13" ry="5" fill="#8cab4f" />
            <rect x="2" y="15" width="22" height="5" fill="#d9a37c" />
            <rect x="24" y="5" width="4" height="18" fill="#3f77c4" />
            <rect x="28" y="3" width="5" height="20" fill="#e770b8" />
            <rect x="33" y="1" width="5" height="22" fill="#8f62d0" />
            <rect x="38" y="3" width="5" height="20" fill="#c47a3c" />
            <path d="M43 3 Q52 4 50 14 Q48 22 43 22 Z" fill="#3d8f52" />
          </svg>
        </div>
        <span className="ml-[13px] relative w-[18px] h-[20px]">
          <span className="absolute left-[5px] top-0 w-[13px] h-[13px] bg-[#f4f4f4]" />
          <span className="absolute left-0 top-[5px] w-[13px] h-[13px] bg-[#222]" />
          <span className="absolute left-[5px] top-[5px] w-[8px] h-[8px] bg-[#b9b9b9]" />
        </span>
        <span className="ml-[26px] relative">
          <svg width="24" height="20" viewBox="0 0 24 20">
            <path d="M0 2 Q0 0 2 0 H9 L11 3 H24 V20 H0 Z" fill="#f9d65c" stroke="#d3a52e" strokeWidth="0.5" />
            <rect x="6" y="13" width="12" height="7" fill="#1c7fd0" />
          </svg>
          <span className="absolute left-[8px] top-[24px] w-[6px] h-[3px] rounded-full bg-[#777]" />
        </span>
        <span className="ml-[13px] w-[38px] h-[38px] rounded-[4px] bg-[#e6ecf7] relative flex items-center justify-center">
          <PlateGrid size={22} rows={6} cols={9} />
          <span className="absolute left-[13px] bottom-[1px] w-[12px] h-[3px] rounded-full bg-[#0a6cc4]" />
        </span>
        <span className="ml-[14px] relative w-[22px] h-[22px] rounded-[4px] bg-[#a91c1c] flex items-center justify-center">
          <svg width="15" height="15" viewBox="0 0 15 15">
            <path d="M1 13 Q6 9 7 2 Q8 9 14 10 Q7 9 1 13 Z" fill="none" stroke="#fff" strokeWidth="1.2" />
          </svg>
          <span className="absolute left-[8px] top-[27px] w-[6px] h-[3px] rounded-full bg-[#777]" />
        </span>
        <span className="ml-[22px] relative w-[22px] h-[24px] rounded-[4px] bg-gradient-to-b from-[#2f7fd8] to-[#3fb8ee] overflow-hidden block">
          <span className="absolute left-[2px] top-[11px] w-[18px] h-[18px] rotate-45 bg-[#7bdcff]" />
          <span className="absolute left-[13px] top-[3px] w-[4px] h-[4px] rounded-full bg-white" />
        </span>
        <span className="ml-[21px] relative w-[24px] h-[28px]">
          <svg width="24" height="28" viewBox="0 0 24 28">
            <rect x="1" y="1" width="14" height="14" fill="#f3f3f3" stroke="#c63b2e" strokeWidth="2" strokeDasharray="3 2" />
            <path d="M11 8 V26 M11 15 H22" stroke="#6c7480" strokeWidth="2" />
            <circle cx="21" cy="14" r="2.6" fill="#2a9bd8" />
            <circle cx="12" cy="24" r="2.6" fill="#2a9bd8" />
          </svg>
        </span>
      </div>
    </div>
  );
}

export default function App() {
  return (
    <div className={`w-[1920px] h-[1080px] relative flex flex-col overflow-hidden bg-white ${font}`}>
      <Defs />
      <TitleBar />
      <MenuBar />
      <Ribbon />
      <DocTabBar />
      <Workspace />
      <StatusBar />
      <Taskbar />
      <div className="absolute left-0 top-[7px] w-[37px] h-[37px] rounded-full bg-white border border-[#cfd6dc] flex items-center justify-center shadow-[0_1px_2px_rgba(0,0,0,0.3)]">
        <PlateGrid size={26} rows={6} cols={9} />
      </div>
    </div>
  );
}
